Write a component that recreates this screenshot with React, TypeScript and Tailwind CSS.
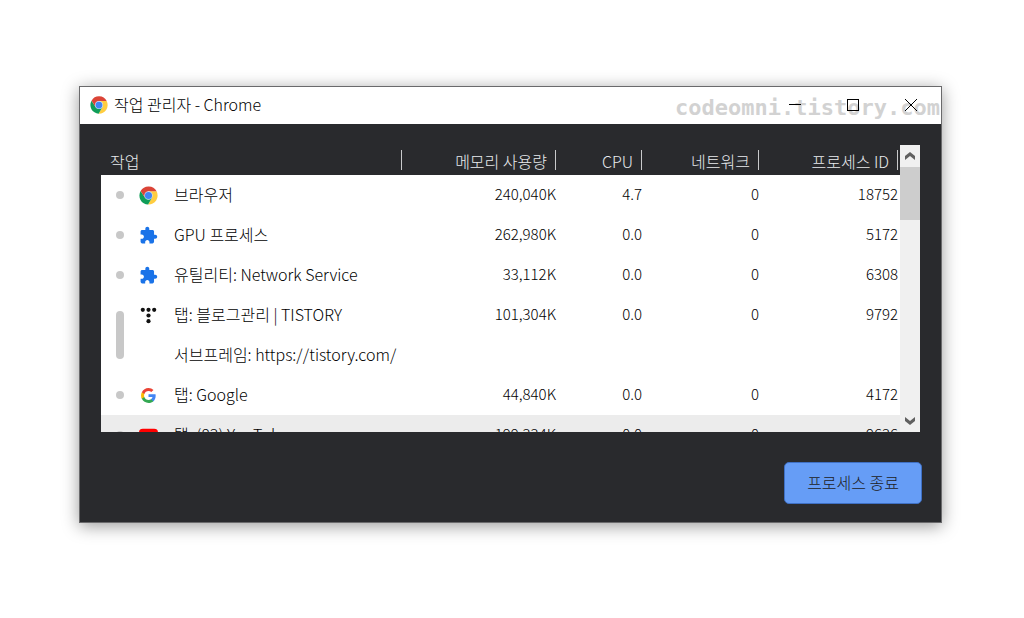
import { ReactNode } from "react";

type Process = {
  icon?: ReactNode;
  name: string;
  memory?: string;
  cpu?: string;
  network?: string;
  pid?: string;
  span?: number;
  selected?: boolean;
};

const ChromeIcon = ({ className }: { className: string }) => (
  <svg viewBox="0 0 48 48" className={className} aria-hidden="true">
    <circle cx="24" cy="24" r="23" fill="#fff" />
    <path d="M24 13.5 H44.5 A23 23 0 0 1 23 47 L33.1 29.2 Z" fill="#ffcd40" />
    <path d="M4.1 12.5 L14.9 29.2 L33.1 29.2 L23 47 A23 23 0 0 1 4.1 12.5 Z" fill="#0f9d58" />
    <path d="M4.1 12.5 A23 23 0 0 1 44.5 13.5 H24 L14.9 29.2 Z" fill="#db4437" />
    <circle cx="24" cy="24" r="10.5" fill="#d5e2fb" />
    <circle cx="24" cy="24" r="9" fill="#4285f4" />
  </svg>
);

const PuzzleIcon = () => (
  <svg viewBox="0 0 24 24" className="size-[19px]" fill="#1a73e8" aria-hidden="true">
    <path d="M20.5 11H19V7c0-1.1-.9-2-2-2h-4V3.5C13 2.12 11.88 1 10.5 1S8 2.12 8 3.5V5H4c-1.1 0-1.99.9-1.99 2v3.8H3.5c1.49 0 2.7 1.21 2.7 2.7s-1.21 2.7-2.7 2.7H2V20c0 1.1.9 2 2 2h3.8v-1.5c0-1.49 1.21-2.7 2.7-2.7s2.7 1.21 2.7 2.7V22H17c1.1 0 2-.9 2-2v-4h1.5c1.38 0 2.5-1.12 2.5-2.5S21.88 11 20.5 11z" />
  </svg>
);

const TistoryIcon = () => (
  <svg viewBox="0 0 20 20" className="size-[19px]" fill="#111" aria-hidden="true">
    <circle cx="4" cy="4" r="2.2" />
    <circle cx="10" cy="4" r="2.2" />
    <circle cx="16" cy="4" r="2.2" />
    <circle cx="10" cy="10" r="2.2" />
    <circle cx="10" cy="16" r="2.2" />
  </svg>
);

const GoogleIcon = () => (
  <svg viewBox="-2 -2 28 28" className="size-[19px]" aria-hidden="true">
    <path fill="#4285f4" d="M22.56 12.25c0-.78-.07-1.53-.2-2.25H12v4.26h5.92c-.26 1.37-1.04 2.53-2.21 3.31v2.77h3.57c2.08-1.92 3.28-4.74 3.28-8.09z" />
    <path fill="#34a853" d="M12 23c2.97 0 5.46-.98 7.28-2.66l-3.57-2.77c-.98.66-2.23 1.06-3.71 1.06-2.86 0-5.29-1.93-6.16-4.53H2.18v2.84C3.99 20.53 7.7 23 12 23z" />
    <path fill="#fbbc05" d="M5.84 14.09c-.22-.66-.35-1.36-.35-2.09s.13-1.43.35-2.09V7.07H2.18C1.43 8.55 1 10.22 1 12s.43 3.45 1.18 4.93l3.66-2.84z" />
    <path fill="#ea4335" d="M12 5.38c1.62 0 3.06.56 4.21 1.64l3.15-3.15C17.45 2.09 14.97 1 12 1 7.7 1 3.99 3.47 2.18 7.07l3.66 2.84c.87-2.6 3.3-4.53 6.16-4.53z" />
  </svg>
);

const YoutubeIcon = () => (
  <svg viewBox="0 0 20 20" className="size-[19px]" aria-hidden="true">
    <rect x="0" y="3" width="20" height="14" rx="4" fill="#f00" />
    <path d="M8 7 L13 10 L8 13 Z" fill="#fff" />
  </svg>
);

const processes: Process[] = [
  { icon: <ChromeIcon className="size-[19px]" />, name: "브라우저", memory: "240,040K", cpu: "4.7", network: "0", pid: "18752", span: 1 },
  { icon: <PuzzleIcon />, name: "GPU 프로세스", memory: "262,980K", cpu: "0.0", network: "0", pid: "5172", span: 1 },
  { icon: <PuzzleIcon />, name: "유틸리티: Network Service", memory: "33,112K", cpu: "0.0", network: "0", pid: "6308", span: 1 },
  { icon: <TistoryIcon />, name: "탭: 블로그관리 | TISTORY", memory: "101,304K", cpu: "0.0", network: "0", pid: "9792", span: 2 },
  { name: "서브프레임: https://tistory.com/" },
  { icon: <GoogleIcon />, name: "탭: Google", memory: "44,840K", cpu: "0.0", network: "0", pid: "4172", span: 1 },
  { icon: <YoutubeIcon />, name: "탭: (83) YouTube", memory: "199,334K", cpu: "0.0", network: "0", pid: "9636", span: 1, selected: true },
];

const columns = ["메모리 사용량", "CPU", "네트워크", "프로세스 ID"];

const HeaderCell = ({ label }: { label: string }) => (
  <div className="flex h-5 items-center justify-end border-r border-[#c8c9cb] pr-2">
    <span className="pt-[2px]">{label}</span>
  </div>
);

const TitleBar = () => (
  <header className="relative flex h-[37px] items-center bg-white pb-[2px] pl-[10px]">
    <ChromeIcon className="size-[18px]" />
    <h1 className="ml-[6px] pb-[2px] text-base text-black">작업 관리자 - Chrome</h1>
    <span className="absolute right-px top-[7px] font-['DejaVu_Sans_Mono',monospace] text-[22px] leading-7 font-bold text-[#d2d2d2]">
      codeomni.tistory.com
    </span>
    <div className="relative mr-px ml-auto flex h-full text-black">
      <button aria-label="최소화" className="flex w-[58px] items-center justify-center">
        <svg viewBox="0 0 12 12" className="size-3" stroke="currentColor" shapeRendering="crispEdges">
          <path d="M0 5.5H12" />
        </svg>
      </button>
      <button aria-label="최대화" className="flex w-[58px] items-center justify-center">
        <svg viewBox="0 0 12 12" className="size-3" stroke="currentColor" fill="none" shapeRendering="crispEdges">
          <path d="M.5 .5H11.5V11.5H.5Z" />
        </svg>
      </button>
      <button aria-label="닫기" className="flex w-[58px] items-center justify-center">
        <svg viewBox="0 0 12 12" className="size-3" stroke="currentColor" fill="none">
          <path d="M0 0L12 12M12 0L0 12" />
        </svg>
      </button>
    </div>
  </header>
);

const ScrollBar = () => (
  <div className="flex w-5 shrink-0 flex-col bg-[#f0f0f0] text-[#606060]">
    <button aria-label="위로" className="flex h-[22px] items-center justify-center">
      <svg viewBox="0 0 10 8" className="h-2 w-[10px]" fill="currentColor">
        <path d="M5 0L10 4V8L5 4L0 8V4Z" />
      </svg>
    </button>
    <div className="h-[53px] bg-[#cdcdcd]" />
    <button aria-label="아래로" className="mt-auto flex h-[22px] items-center justify-center">
      <svg viewBox="0 0 10 8" className="h-2 w-[10px]" fill="currentColor">
        <path d="M5 8L10 4V0L5 4L0 0V4Z" />
      </svg>
    </button>
  </div>
);

export default function App() {
  return (
    <main className="min-h-screen bg-white pt-[86px] pr-[82px] pl-[79px] font-['Noto_Sans_CJK_KR',sans-serif] font-light">
      <section className="border border-[#6a6a6c] bg-[#292a2d] shadow-[0_3px_16px_rgba(0,0,0,0.4)]">
        <TitleBar />
        <div className="px-[21px] pt-[21px] pb-[18px]">
          <div className="flex h-[287px] overflow-hidden">
            <div className="min-w-0 flex-1">
              <table className="w-full table-fixed border-collapse">
                <colgroup>
                  <col className="w-[38px]" />
                  <col />
                  <col className="w-[154px]" />
                  <col className="w-[86px]" />
                  <col className="w-[117px]" />
                  <col className="w-[141px]" />
                </colgroup>
                <thead className="text-base leading-5 text-[#e8eaed]">
                  <tr className="h-[30px]">
                    <th colSpan={2} className="p-0 font-light">
                      <div className="flex h-5 items-center border-r border-[#c8c9cb] pl-[9px]">
                        <span className="pt-[2px]">작업</span>
                      </div>
                    </th>
                    {columns.map((label, index) => (
                      <th key={label} className={index === 3 ? "p-0 pr-[2px] font-light" : "p-0 font-light"}>
                        <HeaderCell label={label} />
                      </th>
                    ))}
                  </tr>
                </thead>
                <tbody className="text-[15px] leading-5 text-black">
                  {processes.map((process) => (
                    <tr key={process.name} className={process.selected ? "h-10 bg-[#ececec]" : "h-10 bg-white"}>
                      {process.span && (
                        <td rowSpan={process.span} className="p-0 pl-[15px]">
                          <div className={process.span > 1 ? "h-12 w-2 rounded-full bg-[#c8c8c8]" : "size-2 rounded-full bg-[#c8c8c8]"} />
                        </td>
                      )}
                      <td className="p-0">
                        <div className="flex items-center gap-4 text-base leading-5 whitespace-nowrap">
                          <span className="size-[19px]">{process.icon}</span>
                          <span className="pb-[2px]">{process.name}</span>
                        </div>
                      </td>
                      <td className="p-0 pb-[2px] text-right">{process.memory}</td>
                      <td className="p-0 pb-[2px] text-right">{process.cpu}</td>
                      <td className="p-0 pb-[2px] text-right">{process.network}</td>
                      <td className="p-0 pr-[2px] pb-[2px] text-right">{process.pid}</td>
                    </tr>
                  ))}
                </tbody>
              </table>
            </div>
            <ScrollBar />
          </div>
          <div className="mt-[30px] -mr-[2px] flex justify-end">
            <button className="h-[42px] rounded-[5px] border border-[#3f70c4] bg-[#669df6] px-[22px] pb-[2px] text-base text-[#202124]">
              프로세스 종료
            </button>
          </div>
        </div>
      </section>
    </main>
  );
}
